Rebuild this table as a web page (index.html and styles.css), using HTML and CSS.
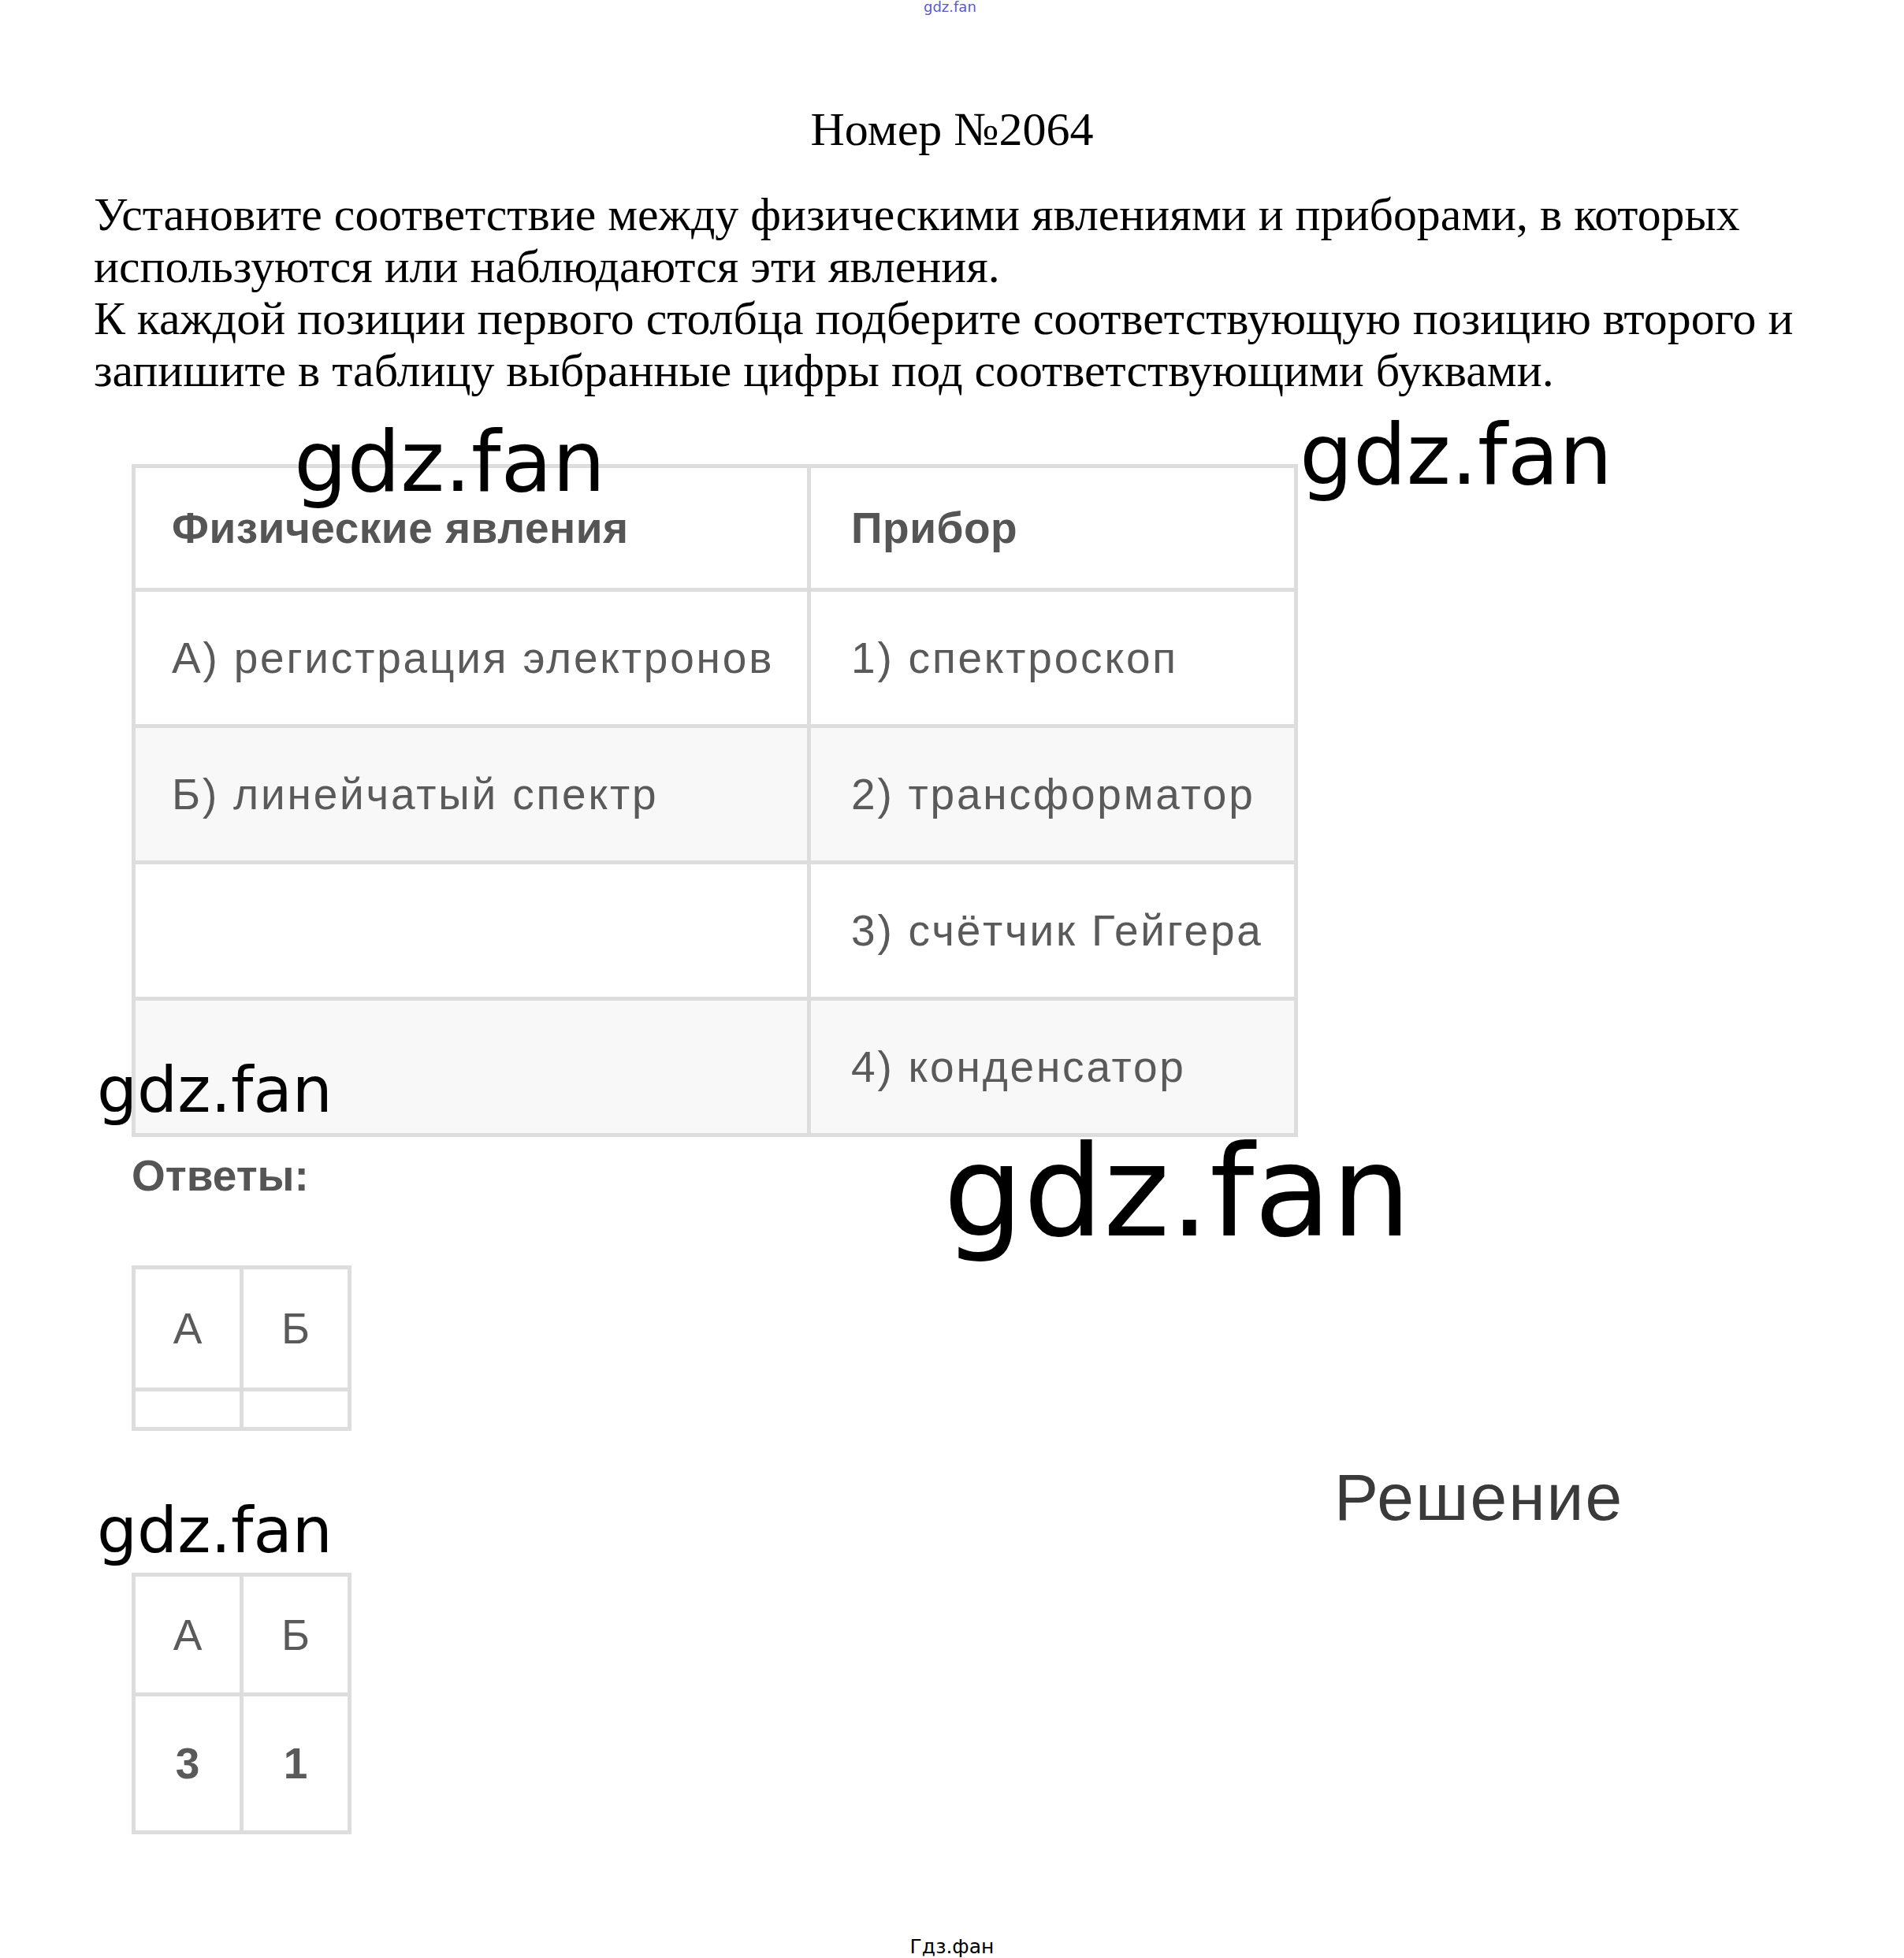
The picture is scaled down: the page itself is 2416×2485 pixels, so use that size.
FILE: index.html
```html
<!DOCTYPE html>
<html lang="ru">
<head>
<meta charset="utf-8">
<title>Номер №2064</title>
<link rel="stylesheet" href="styles.css">
</head>
<body>
<div class="page">
  <h1 class="title">Номер №2064</h1>
  <div class="task">
    Установите соответствие между физическими явлениями и приборами, в которых<br>
    используются или наблюдаются эти явления.<br>
    К каждой позиции первого столбца подберите соответствующую позицию второго и<br>
    запишите в таблицу выбранные цифры под соответствующими буквами.
  </div>

  <div class="shot">
    <table class="match">
      <colgroup><col class="c1"><col class="c2"></colgroup>
      <tr class="head"><th>Физические явления</th><th>Прибор</th></tr>
      <tr><td>А) регистрация электронов</td><td>1) спектроскоп</td></tr>
      <tr class="alt"><td>Б) линейчатый спектр</td><td>2) трансформатор</td></tr>
      <tr><td></td><td>3) счётчик Гейгера</td></tr>
      <tr class="alt"><td></td><td>4) конденсатор</td></tr>
    </table>
    <div class="answers-label">Ответы:</div>
    <table class="ans ans-empty">
      <tr class="r1"><td>А</td><td>Б</td></tr>
      <tr class="r2"><td></td><td></td></tr>
    </table>
  </div>

  <div class="solution-head">Решение</div>

  <table class="ans ans-filled">
    <tr class="r1"><td>А</td><td>Б</td></tr>
    <tr class="r2"><td>3</td><td>1</td></tr>
  </table>

  <footer class="foot">Гдз.фан</footer>
</div>

<div class="wm wm-tiny">gdz.fan</div>
<div class="wm wm-1">gdz.fan</div>
<div class="wm wm-2">gdz.fan</div>
<div class="wm wm-3">gdz.fan</div>
<div class="wm wm-4">gdz.fan</div>
<div class="wm wm-5">gdz.fan</div>
</body>
</html>
```

FILE: styles.css
```css
html, body {
  margin: 0;
  padding: 0;
  background: #ffffff;
}

body {
  position: relative;
  width: 2416px;
  min-height: 2485px;
}

.page {
  display: flex;
  flex-direction: column;
  padding-top: 131px;
}

.title {
  margin: 0;
  font-family: "Liberation Serif", "Times New Roman", serif;
  font-weight: normal;
  font-size: 60px;
  line-height: 66px;
  text-align: center;
  color: #000;
}

.task {
  margin: 42px 0 0 119px;
  font-family: "Liberation Serif", "Times New Roman", serif;
  font-size: 59.8px;
  line-height: 66px;
  color: #000;
}

.shot {
  margin: 86px 0 0 167px;
  display: flex;
  flex-direction: column;
  align-items: flex-start;
  font-family: "Liberation Sans", Arial, sans-serif;
  color: #555;
}

.match {
  border-collapse: collapse;
  table-layout: fixed;
  width: 1475px;
}

.match .c1 { width: 857px; }
.match .c2 { width: 618px; }

.match th,
.match td {
  border: 5px solid #dddddd;
  padding: 0 0 0 46px;
  text-align: left;
  vertical-align: middle;
  font-size: 55px;
  letter-spacing: 2.8px;
  white-space: nowrap;
  height: 168px;
  color: #5a5a5a;
}

.match th + th,
.match td + td {
  padding-left: 51px;
}

.match th {
  font-weight: bold;
  letter-spacing: 0.5px;
  height: 152px;
  color: #555;
}

.match tr.alt td {
  background: #f8f8f8;
}

.answers-label {
  margin-top: 19px;
  font-size: 55px;
  line-height: 60px;
  font-weight: bold;
  color: #555;
}

.ans {
  border-collapse: collapse;
  table-layout: fixed;
  width: 279px;
  font-family: "Liberation Sans", Arial, sans-serif;
  color: #5a5a5a;
}

.ans td {
  border: 5px solid #dddddd;
  text-align: center;
  vertical-align: middle;
  font-size: 55px;
  padding: 0;
  width: 50%;
}

.ans-empty {
  margin-top: 84px;
}

.ans-empty .r1 td { height: 150px; }
.ans-empty .r2 td { height: 45px; }

.solution-head {
  margin: 34px 0 0 1693px;
  font-family: "Liberation Sans", Arial, sans-serif;
  font-size: 84px;
  line-height: 100px;
  letter-spacing: 2px;
  color: #3a3a3a;
}

.ans-filled {
  margin: 46px 0 0 167px;
}

.ans-filled .r1 td { height: 147px; }
.ans-filled .r2 td { height: 170px; font-weight: bold; }

.foot {
  margin-top: 128px;
  font-family: "DejaVu Sans", Verdana, sans-serif;
  font-size: 25px;
  line-height: 30px;
  text-align: center;
  color: #000;
}

.wm {
  position: absolute;
  font-family: "DejaVu Sans", Verdana, sans-serif;
  line-height: 1;
  color: #000;
  white-space: nowrap;
}

.wm-tiny {
  left: 1172px;
  top: 0;
  font-size: 18px;
  color: #5a5ad2;
}

.wm-1 { left: 373px; top: 533px; font-size: 106.5px; }
.wm-2 { left: 1649px; top: 524px; font-size: 107px; }
.wm-3 { left: 123px; top: 1343px; font-size: 80.5px; }
.wm-4 { left: 1197px; top: 1433px; font-size: 160px; }
.wm-5 { left: 123px; top: 1902px; font-size: 80.5px; }
```
